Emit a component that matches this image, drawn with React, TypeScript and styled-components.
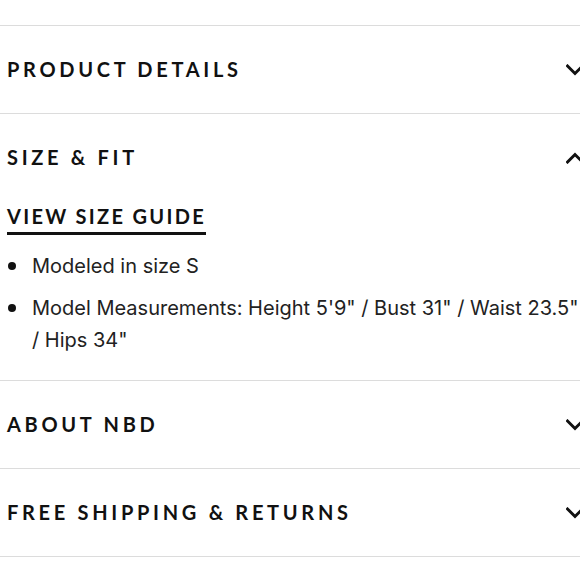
import React from "react";
import styled, { createGlobalStyle } from "styled-components";

const Global = createGlobalStyle`
  html, body { margin: 0; padding: 0; background: #fff; overflow: hidden; }
  body { width: 580px; height: 580px; }
`;

const Wrapper = styled.div`
  width: 592px;
  padding-top: 25px;
`;

const Section = styled.section`
  border-top: 1px solid #dcdcdc;
  &:last-child { border-bottom: 1px solid #dcdcdc; }
`;

const Header = styled.div`
  height: 87px;
  display: flex;
  align-items: center;
  justify-content: space-between;
  padding: 0 8px 0 7px;
`;

const Title = styled.h2`
  margin: 0;
  font-family: "Lato", "Liberation Sans", sans-serif;
  font-weight: 700;
  font-size: 20px;
  letter-spacing: 3.7px;
  color: #111;
  position: relative;
  top: -1px;
`;

const Body = styled.div`
  padding: 0 10px 14px 7px;
  margin-top: 4px;
`;

const GuideLink = styled.a`
  display: inline-block;
  font-family: "Lato", "Liberation Sans", sans-serif;
  font-weight: 700;
  font-size: 20px;
  letter-spacing: 2.3px;
  color: #111;
  text-decoration: none;
  border-bottom: 3px solid #111;
  line-height: 22px;
  padding-bottom: 5px;
`;

const List = styled.ul`
  list-style: none;
  margin: 15px 0 0 0;
  padding: 0 0 0 25px;
  font-family: "Inter", "Liberation Sans", sans-serif;
  font-size: 20px;
  line-height: 32px;
  color: #222;
`;

const Item = styled.li`
  position: relative;
  margin-bottom: 10px;
  &::before {
    content: "";
    position: absolute;
    left: -24px;
    top: 12px;
    width: 8px;
    height: 8px;
    border-radius: 50%;
    background: #111;
  }
`;

const Chevron = ({ up }: { up?: boolean }) => (
  <svg width="18" height="12" viewBox="0 0 18 12" fill="none">
    <path
      d={up ? "M1.5 10 L9 2.5 L16.5 10" : "M1.5 2 L9 9.5 L16.5 2"}
      stroke="#111"
      strokeWidth="3"
      strokeLinecap="square"
    />
  </svg>
);

const Accordion = ({ title, open, children }: { title: string; open?: boolean; children?: React.ReactNode }) => (
  <Section>
    <Header>
      <Title>{title}</Title>
      <Chevron up={open} />
    </Header>
    {open && <Body>{children}</Body>}
  </Section>
);

export default function App() {
  return (
    <Wrapper>
      <Global />
      <Accordion title="PRODUCT DETAILS" />
      <Accordion title="SIZE & FIT" open>
        <GuideLink href="#">VIEW SIZE GUIDE</GuideLink>
        <List>
          <Item>Modeled in size S</Item>
          <Item>Model Measurements: Height 5'9" / Bust 31" / Waist 23.5" / Hips 34"</Item>
        </List>
      </Accordion>
      <Accordion title="ABOUT NBD" />
      <Accordion title="FREE SHIPPING & RETURNS" />
    </Wrapper>
  );
}
